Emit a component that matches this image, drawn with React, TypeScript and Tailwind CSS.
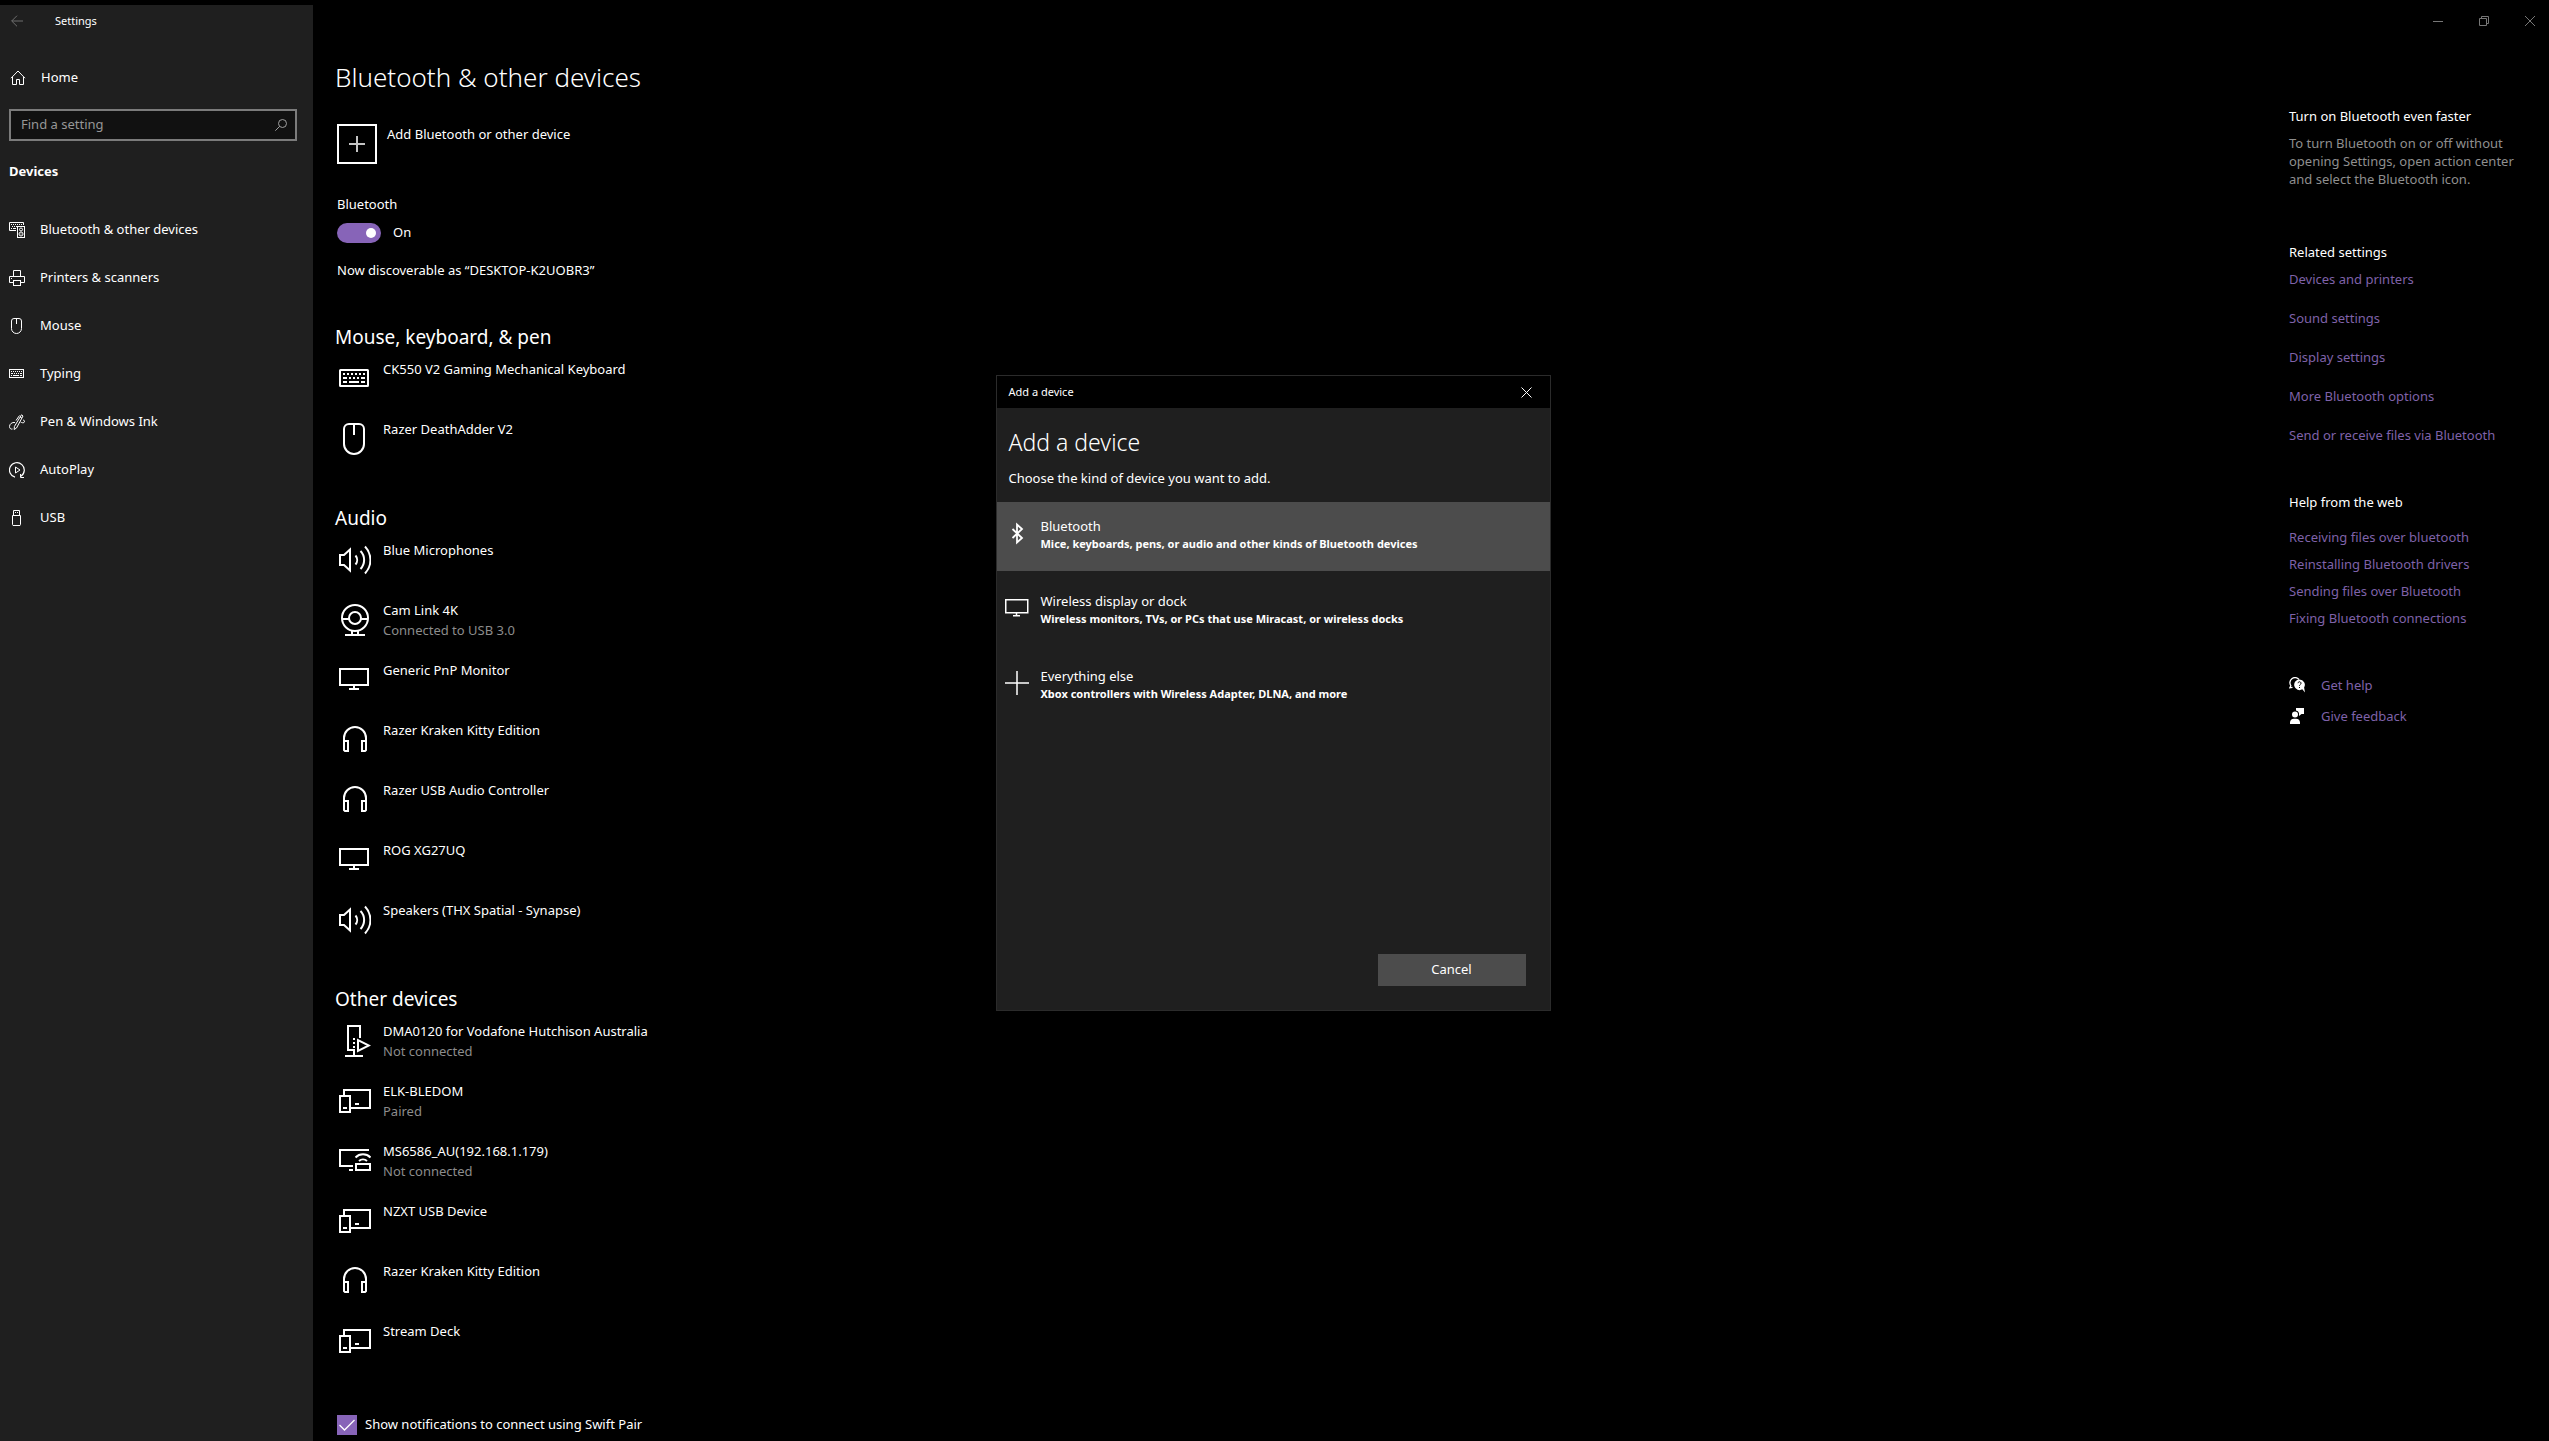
import { useState } from 'react';
import type { ReactNode } from 'react';

type DeviceIcon = 'keyboard' | 'mouse' | 'speaker' | 'webcam' | 'monitor' | 'headphones' | 'server' | 'devices' | 'router';

interface Device {
  name: string;
  icon: DeviceIcon;
  status?: string;
}

interface DeviceGroup {
  title: string;
  devices: Device[];
}

const DEVICE_GROUPS: DeviceGroup[] = [
  {
    title: 'Mouse, keyboard, & pen',
    devices: [
      { name: 'CK550 V2 Gaming Mechanical Keyboard', icon: 'keyboard' },
      { name: 'Razer DeathAdder V2', icon: 'mouse' },
    ],
  },
  {
    title: 'Audio',
    devices: [
      { name: 'Blue Microphones', icon: 'speaker' },
      { name: 'Cam Link 4K', icon: 'webcam', status: 'Connected to USB 3.0' },
      { name: 'Generic PnP Monitor', icon: 'monitor' },
      { name: 'Razer Kraken Kitty Edition', icon: 'headphones' },
      { name: 'Razer USB Audio Controller', icon: 'headphones' },
      { name: 'ROG XG27UQ', icon: 'monitor' },
      { name: 'Speakers (THX Spatial - Synapse)', icon: 'speaker' },
    ],
  },
  {
    title: 'Other devices',
    devices: [
      { name: 'DMA0120 for Vodafone Hutchison Australia', icon: 'server', status: 'Not connected' },
      { name: 'ELK-BLEDOM', icon: 'devices', status: 'Paired' },
      { name: 'MS6586_AU(192.168.1.179)', icon: 'router', status: 'Not connected' },
      { name: 'NZXT USB Device', icon: 'devices' },
      { name: 'Razer Kraken Kitty Edition', icon: 'headphones' },
      { name: 'Stream Deck', icon: 'devices' },
    ],
  },
];

const RELATED_LINKS = [
  'Devices and printers',
  'Sound settings',
  'Display settings',
  'More Bluetooth options',
  'Send or receive files via Bluetooth',
];

const HELP_LINKS = [
  'Receiving files over bluetooth',
  'Reinstalling Bluetooth drivers',
  'Sending files over Bluetooth',
  'Fixing Bluetooth connections',
];

// 32px device glyphs
const DEVICE_SHAPES: Record<DeviceIcon, ReactNode> = {
  keyboard: (
    <>
      <rect x="1" y="7" width="28" height="16" rx="0.5" />
      <path d="M4 11h2M8 11h2M12 11h2M16 11h2M20 11h2M24 11h2M4 15h4M10 15h2M14 15h2M18 15h2M22 15h4M4 19h4M10 19h10M22 19h4" />
    </>
  ),
  mouse: (
    <>
      <path d="M10 1h10a5 5 0 0 1 5 5v15a10 10 0 0 1-20 0V6a5 5 0 0 1 5-5Z" />
      <path d="M15 1v11" />
    </>
  ),
  speaker: (
    <>
      <path d="M1 11h4l6-5.5v21L5 21H1Z" />
      <path d="M16.5 11.5a7 7 0 0 1 0 9M21.5 7a13 13 0 0 1 0 18M26 2.5a19.5 19.5 0 0 1 0 27" />
    </>
  ),
  webcam: (
    <>
      <circle cx="16" cy="14" r="13" />
      <circle cx="16" cy="14" r="6" />
      <path d="M3 15h7M22 15h7M13 27v4M19 27v4M6 31h20" />
    </>
  ),
  monitor: (
    <>
      <rect x="1" y="5" width="28" height="16" />
      <path d="M15 21v4M10 25h10" />
    </>
  ),
  headphones: (
    <>
      <path d="M5 18v-4a11 11 0 0 1 22 0v4" />
      <path d="M5 17h4v10H6l-1-1ZM27 17h-4v10h3l1-1Z" />
    </>
  ),
  server: (
    <>
      <path d="M21 13V1H9v24h6v6M6 31h18" />
      <path d="M14 14h2M14 18h2M14 22h2" />
      <path d="M19 15v11l11-5.5Z" />
    </>
  ),
  devices: (
    <>
      <path d="M5 10V5h26v18H12" />
      <rect x="1" y="11" width="10" height="16" />
      <path d="M4 23h4M16 19h4" />
    </>
  ),
  router: (
    <>
      <path d="M30 5H1v16h13M10 25h4" />
      <rect x="17" y="19" width="14" height="6" />
      <path d="M16.5 12.5a10.5 10.5 0 0 1 15 0M20 16a6 6 0 0 1 8 0" />
    </>
  ),
};

function DeviceGlyph({ icon }: { icon: DeviceIcon }) {
  return (
    <svg className="mt-1 h-8 w-8 shrink-0" viewBox="0 0 32 32" fill="none" stroke="white" strokeWidth="2" aria-hidden="true">
      {DEVICE_SHAPES[icon]}
    </svg>
  );
}

function SmallIcon({ children }: { children: ReactNode }) {
  return (
    <svg className="h-4 w-4 shrink-0" viewBox="0 0 16 16" fill="none" stroke="white" aria-hidden="true">
      {children}
    </svg>
  );
}

const NAV_ITEMS: { label: string; shape: ReactNode }[] = [
  {
    label: 'Bluetooth & other devices',
    shape: (
      <>
        <path d="M14.5 3V.5H.5v8H7" />
        <path d="M2 2.5h1M4 2.5h1M6 2.5h1M8 2.5h1M10 2.5h1M12 2.5h1M3 4.5h1M5 4.5h1M7 4.5h1M2 6.5h1M4 6.5h3" />
        <rect x="8.5" y="4.5" width="7" height="11" />
        <circle cx="12" cy="7.5" r="1.5" />
        <circle cx="12" cy="12" r="2" />
        <path d="M11.5 12h1" />
      </>
    ),
  },
  {
    label: 'Printers & scanners',
    shape: (
      <>
        <path d="M4.5 6V.5h7V6M4 12.5H.5v-6h15v6H12" />
        <rect x="4.5" y="10.5" width="7" height="5" />
        <path d="M2 8.5h1" />
      </>
    ),
  },
  {
    label: 'Mouse',
    shape: (
      <>
        <path d="M5 .5h5A2.5 2.5 0 0 1 12.5 3v7.5a5 5 0 0 1-10 0V3A2.5 2.5 0 0 1 5 .5Z" />
        <path d="M7.5 1v5" />
      </>
    ),
  },
  {
    label: 'Typing',
    shape: (
      <>
        <rect x=".5" y="3.5" width="14" height="8" />
        <path d="M2 5.5h1M4 5.5h1M6 5.5h1M8 5.5h1M10 5.5h1M12 5.5h1M2 7.5h2M5 7.5h1M7 7.5h1M9 7.5h1M11 7.5h2M2 9.5h1M4 9.5h6M11 9.5h2" />
      </>
    ),
  },
  {
    label: 'Pen & Windows Ink',
    shape: (
      <>
        <path d="M12.5.8 14 2 7.5 14l-2.3 1.5.2-3ZM11 3l2 1.2" />
        <path d="M10.5 1.5 7 6.5" />
        <path d="M6 8.5c-3-.5-5.5 1.5-5.5 4 0 2 1.5 3 3 2.5M11.5 8c1.5.8 2.5 1 3.5.5s.5-2.5-.8-2.5" />
      </>
    ),
  },
  {
    label: 'AutoPlay',
    shape: (
      <>
        <path d="M6 15.2a7.4 7.4 0 1 1 6-1" strokeWidth="1.2" />
        <path d="M6.5 5v6L11 8ZM11.5 12v3.5H15" />
      </>
    ),
  },
  {
    label: 'USB',
    shape: (
      <>
        <path d="M4.5 5V.5h6V5" />
        <path d="M3.5 5.5h8v9l-.5 1H4l-.5-1ZM6 2.5h1M8 2.5h1" />
      </>
    ),
  },
];

const DEVICE_KINDS: { title: string; detail: string; shape: ReactNode }[] = [
  {
    title: 'Bluetooth',
    detail: 'Mice, keyboards, pens, or audio and other kinds of Bluetooth devices',
    shape: <path d="m7.5 8 9.5 9-5 4.5v-18L17 8l-9.5 9" strokeWidth="1.8" />,
  },
  {
    title: 'Wireless display or dock',
    detail: 'Wireless monitors, TVs, or PCs that use Miracast, or wireless docks',
    shape: (
      <>
        <rect x=".75" y="3.75" width="22" height="13" strokeWidth="1.5" />
        <path d="M11.5 17v3M8 19.75h7" strokeWidth="1.5" />
      </>
    ),
  },
  {
    title: 'Everything else',
    detail: 'Xbox controllers with Wireless Adapter, DLNA, and more',
    shape: <path d="M12 0v24M0 12h24" strokeWidth="1.5" />,
  },
];

function Sidebar() {
  return (
    <aside className="w-[313px] shrink-0 bg-[#1f1f1f]">
      <div className="flex h-8 items-center gap-8 pl-[11px] text-[11px]">
        <button aria-label="Back">
          <svg className="h-3 w-3" viewBox="0 0 12 12" fill="none" stroke="#6e6e6e" aria-hidden="true">
            <path d="M12 6H.7M6 .7.7 6 6 11.3" />
          </svg>
        </button>
        <span>Settings</span>
      </div>

      <a href="#home" className="mt-[21px] flex h-10 items-center gap-[15px] pl-[10px]">
        <SmallIcon>
          <path d="M1 8.2 8 1l7 7.2" />
          <path d="M2.5 7v7.5h4v-5h3v5h4V7" />
        </SmallIcon>
        Home
      </a>

      <label className="mx-[9px] mt-[11px] mr-4 flex h-8 items-center border-2 border-[#7b7b7b] bg-[#111] pr-2 pl-[10px]">
        <input
          type="text"
          aria-label="Find a setting"
          placeholder="Find a setting"
          className="min-w-0 flex-1 bg-transparent outline-none placeholder:text-[#979797]"
        />
        <svg className="h-3 w-3" viewBox="0 0 12 12" fill="none" stroke="#a0a0a0" aria-hidden="true">
          <circle cx="7.5" cy="4.5" r="4" />
          <path d="M4.7 7.3.3 11.7" />
        </svg>
      </label>

      <h2 className="mt-5 pl-[9px] leading-5 font-bold">Devices</h2>

      <nav className="mt-[25px]">
        {NAV_ITEMS.map((item) => (
          <a key={item.label} href="#devices" className="flex h-12 items-center gap-[15px] pl-[9px]">
            <SmallIcon>{item.shape}</SmallIcon>
            {item.label}
          </a>
        ))}
      </nav>
    </aside>
  );
}

function WindowControls() {
  return (
    <div className="flex h-8 items-center justify-end gap-[10px] pr-px">
      <button aria-label="Minimize" className="flex w-9 justify-center">
        <svg className="h-[10px] w-[10px]" viewBox="0 0 10 10" fill="none" stroke="#777" aria-hidden="true">
          <path d="M0 5.5h10" />
        </svg>
      </button>
      <button aria-label="Restore" className="flex w-9 justify-center">
        <svg className="h-[10px] w-[10px]" viewBox="0 0 10 10" fill="none" stroke="#777" aria-hidden="true">
          <path d="M.5 2.5h7v7h-7ZM2.5 2.5v-2h7v7h-2" />
        </svg>
      </button>
      <button aria-label="Close" className="flex w-9 justify-center">
        <svg className="h-[10px] w-[10px]" viewBox="0 0 10 10" fill="none" stroke="#777" aria-hidden="true">
          <path d="m0 0 10 10M10 0 0 10" />
        </svg>
      </button>
    </div>
  );
}

function DeviceSection({ group }: { group: DeviceGroup }) {
  return (
    <section className="mt-[25px]">
      <h2 className="text-[19px] leading-7">{group.title}</h2>
      <ul className="mt-2">
        {group.devices.map((d, i) => (
          <li key={i} className="flex h-15 gap-3 pl-1">
            <DeviceGlyph icon={d.icon} />
            <div className="leading-5">
              <p>{d.name}</p>
              {d.status && <p className="text-[#8c8c8c]">{d.status}</p>}
            </div>
          </li>
        ))}
      </ul>
    </section>
  );
}

function RelatedPanel() {
  return (
    <aside className="w-[260px] shrink-0 pt-[70px] pr-6 leading-[18px]">
      <h2>Turn on Bluetooth even faster</h2>
      <p className="mt-[9px] text-[#8f8f8f]">
        To turn Bluetooth on or off without opening Settings, open action center and select the Bluetooth icon.
      </p>

      <h2 className="mt-[55px]">Related settings</h2>
      <ul className="mt-[9px] space-y-[21px] text-[#7f62a9]">
        {RELATED_LINKS.map((l) => (
          <li key={l}>
            <a href="#related" className="hover:text-white">{l}</a>
          </li>
        ))}
      </ul>

      <h2 className="mt-[49px]">Help from the web</h2>
      <ul className="mt-[17px] space-y-[9px] text-[#7f62a9]">
        {HELP_LINKS.map((l) => (
          <li key={l}>
            <a href="#help" className="hover:text-white">{l}</a>
          </li>
        ))}
      </ul>

      <div className="mt-[49px] space-y-[13px] text-[#7f62a9]">
        <a href="#get-help" className="flex items-center gap-4">
          <SmallIcon>
            <path d="M2 8.8A4.8 4.8 0 1 1 10 2.5M2 8.5.8 10.8l2.7-.5" strokeWidth="1.3" />
            <path d="M10.5 2.5a5.3 5.3 0 1 0 2.8 9.8L16 15.5l-.9-5a5.3 5.3 0 0 0-4.6-8Z" fill="white" stroke="none" />
            <path d="M9 6.2a1.5 1.5 0 1 1 2.2 1.4c-.5.3-.7.6-.7 1.2M10.5 10v1" stroke="black" />
          </SmallIcon>
          Get help
        </a>
        <a href="#feedback" className="flex items-center gap-4">
          <SmallIcon>
            <g fill="white" stroke="none">
              <circle cx="6" cy="6.5" r="3" />
              <path d="M1 16v-1.5a4 4 0 0 1 4-3.8h2a4 4 0 0 1 4 3.8V16Z" />
              <path d="M7 0h8v6h-2.5L10 8V5a4 4 0 0 0-3-2.5Z" />
            </g>
          </SmallIcon>
          Give feedback
        </a>
      </div>
    </aside>
  );
}

function AddDeviceDialog({ onClose }: { onClose: () => void }) {
  return (
    <div className="fixed inset-0 flex items-center justify-center pr-[3px] pb-[55px]">
      <div role="dialog" aria-label="Add a device" className="flex min-h-[636px] w-[555px] flex-col border border-[#2b2b2b] bg-[#1f1f1f]">
        <div className="flex h-8 items-center justify-between bg-black pr-[18px] pl-3 text-[11px]">
          <span>Add a device</span>
          <button aria-label="Close dialog" onClick={onClose}>
            <svg className="h-[11px] w-[11px]" viewBox="0 0 11 11" fill="none" stroke="white" aria-hidden="true">
              <path d="m.5.5 10 10M10.5.5l-10 10" />
            </svg>
          </button>
        </div>

        <h2 className="mt-[18px] pl-3 text-[23px] leading-8 font-light">Add a device</h2>
        <p className="mt-[10px] pl-3 leading-5">Choose the kind of device you want to add.</p>

        <div className="mt-[14px] space-y-[6px]">
          {DEVICE_KINDS.map((k, i) => (
            <button
              key={k.title}
              className={`flex h-[69px] w-full gap-3 pt-[14px] pl-2 text-left hover:bg-[#4c4c4c] ${i === 0 ? 'bg-[#4c4c4c]' : ''}`}
            >
              <svg className="mt-[5px] h-6 w-6 shrink-0" viewBox="0 0 24 24" fill="none" stroke="white" aria-hidden="true">
                {k.shape}
              </svg>
              <span>
                <span className="block leading-5">{k.title}</span>
                <span className="block text-[11px] leading-4 font-bold">{k.detail}</span>
              </span>
            </button>
          ))}
        </div>

        <div className="mt-auto flex justify-end pr-6 pb-6">
          <button onClick={onClose} className="h-8 w-[148px] bg-[#4c4c4c] hover:bg-[#5c5c5c]">
            Cancel
          </button>
        </div>
      </div>
    </div>
  );
}

export default function App() {
  const [bluetoothOn, setBluetoothOn] = useState(true);
  const [swiftPair, setSwiftPair] = useState(true);
  const [dialogOpen, setDialogOpen] = useState(true);

  return (
    <div className="flex min-h-screen bg-black pt-[5px] font-['Noto_Sans','Open_Sans',sans-serif] text-[13px] text-white">
      <Sidebar />

      <div className="min-w-0 flex-1">
        <WindowControls />

        <div className="flex justify-between">
          <main className="pt-[22px] pb-1 pl-[22px]">
            <h1 className="text-[26px] leading-9 font-light">Bluetooth & other devices</h1>

            <div className="pl-[2px]">
              <button onClick={() => setDialogOpen(true)} className="mt-[29px] flex gap-[10px]">
                <svg className="h-10 w-10" viewBox="0 0 40 40" fill="none" stroke="white" strokeWidth="2" aria-hidden="true">
                  <rect x="1" y="1" width="38" height="38" />
                  <path d="M20 12v16M12 20h16" stroke="#c4c4c4" />
                </svg>
                <span className="leading-5">Add Bluetooth or other device</span>
              </button>

              <p className="mt-[30px] leading-5">Bluetooth</p>
              <label className="mt-[9px] flex h-5 items-center gap-3">
                <input
                  type="checkbox"
                  role="switch"
                  aria-label="Bluetooth"
                  checked={bluetoothOn}
                  onChange={(e) => setBluetoothOn(e.target.checked)}
                  className="flex h-5 w-11 appearance-none items-center rounded-full bg-[#555] px-[5px] before:h-[10px] before:w-[10px] before:rounded-full before:bg-white checked:justify-end checked:bg-[#8764b8]"
                />
                {bluetoothOn ? 'On' : 'Off'}
              </label>
              <p className="mt-[17px] leading-5">Now discoverable as “DESKTOP-K2UOBR3”</p>
            </div>

            <div className="mt-[43px]">
              {DEVICE_GROUPS.map((g) => (
                <DeviceSection key={g.title} group={g} />
              ))}
            </div>

            <label className="mt-[34px] flex h-5 items-center gap-2 pl-[2px]">
              <span className="grid h-5 w-5">
                <input
                  type="checkbox"
                  checked={swiftPair}
                  onChange={(e) => setSwiftPair(e.target.checked)}
                  className="col-start-1 row-start-1 h-5 w-5 appearance-none border-2 border-[#8764b8] checked:bg-[#8764b8]"
                />
                {swiftPair && (
                  <svg className="pointer-events-none col-start-1 row-start-1 h-5 w-5" viewBox="0 0 20 20" fill="none" stroke="white" aria-hidden="true">
                    <path d="m2.5 10 5 5 10-10" strokeWidth="1.3" />
                  </svg>
                )}
              </span>
              Show notifications to connect using Swift Pair
            </label>
          </main>

          <RelatedPanel />
        </div>
      </div>

      {dialogOpen && <AddDeviceDialog onClose={() => setDialogOpen(false)} />}
    </div>
  );
}
